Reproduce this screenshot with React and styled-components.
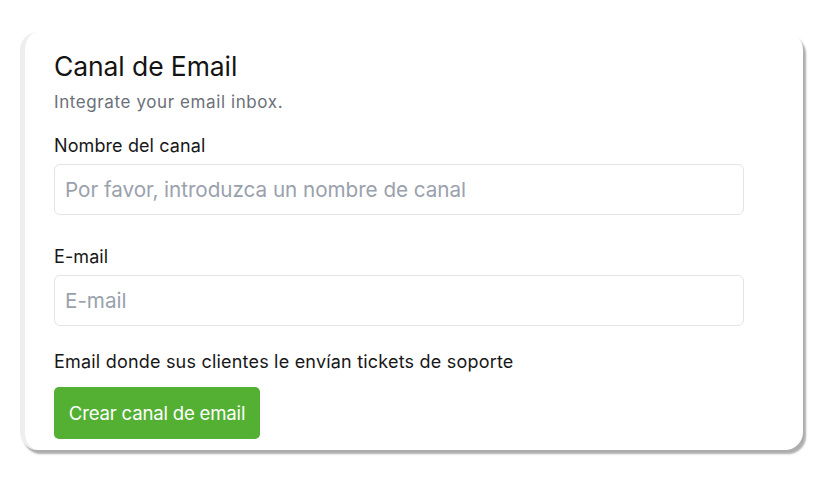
import React from 'react';
import styled, { createGlobalStyle } from 'styled-components';

const GlobalStyle = createGlobalStyle`
  html, body {
    margin: 0;
    padding: 0;
    background: #ffffff;
    font-family: Inter, "Noto Sans", "Liberation Sans", sans-serif;
  }
  * { box-sizing: border-box; }
`;

const Page = styled.div`
  width: 837px;
  height: 477px;
  padding: 32px 34px 0 20px;
`;

const Card = styled.div`
  width: 783px;
  height: 418px;
  background: #ffffff;
  border-left: 5px solid #eeeeee;
  border-radius: 18px;
  box-shadow: 3px 4px 2px rgba(0, 0, 0, 0.32);
  padding: 17px 0 0 29px;
  display: flex;
  flex-direction: column;
`;

const Title = styled.h2`
  margin: 0;
  font-size: 26.5px;
  line-height: 34px;
  font-weight: 400;
  color: #141414;
  letter-spacing: -0.1px;
`;

const Subtitle = styled.p`
  margin: 8px 0 0;
  font-size: 17px;
  line-height: 22px;
  color: #6b7078;
  letter-spacing: 0.6px;
`;

const Field = styled.div`
  display: flex;
  flex-direction: column;
  margin-top: ${p => p.$top}px;
`;

const Label = styled.label`
  font-size: 18px;
  line-height: 22px;
  color: #171717;
  letter-spacing: 0.1px;
`;

const Input = styled.input`
  margin-top: 7px;
  width: 690px;
  height: 51px;
  border: 1px solid #e2e4e8;
  border-radius: 6px;
  padding: 0 10px;
  font-family: inherit;
  font-size: 20.7px;
  color: #222;
  outline: none;
  letter-spacing: -0.05px;
  &::placeholder {
    color: #9aa1ad;
  }
`;

const Help = styled.p`
  margin: 25px 0 0;
  font-size: 18px;
  line-height: 22px;
  color: #171717;
  letter-spacing: 0.2px;
`;

const Button = styled.button`
  margin-top: 14px;
  align-self: flex-start;
  width: 206px;
  height: 52px;
  border: none;
  border-radius: 5px;
  background: #53b033;
  color: #ffffff;
  font-family: inherit;
  font-size: 18.6px;
  letter-spacing: -0.2px;
  cursor: pointer;
`;

export default function App() {
  return (
    <>
      <GlobalStyle />
      <Page>
        <Card>
          <Title>Canal de Email</Title>
          <Subtitle>Integrate your email inbox.</Subtitle>
          <Field $top={22}>
            <Label>Nombre del canal</Label>
            <Input placeholder="Por favor, introduzca un nombre de canal" />
          </Field>
          <Field $top={31}>
            <Label>E-mail</Label>
            <Input placeholder="E-mail" />
          </Field>
          <Help>Email donde sus clientes le envían tickets de soporte</Help>
          <Button>Crear canal de email</Button>
        </Card>
      </Page>
    </>
  );
}
